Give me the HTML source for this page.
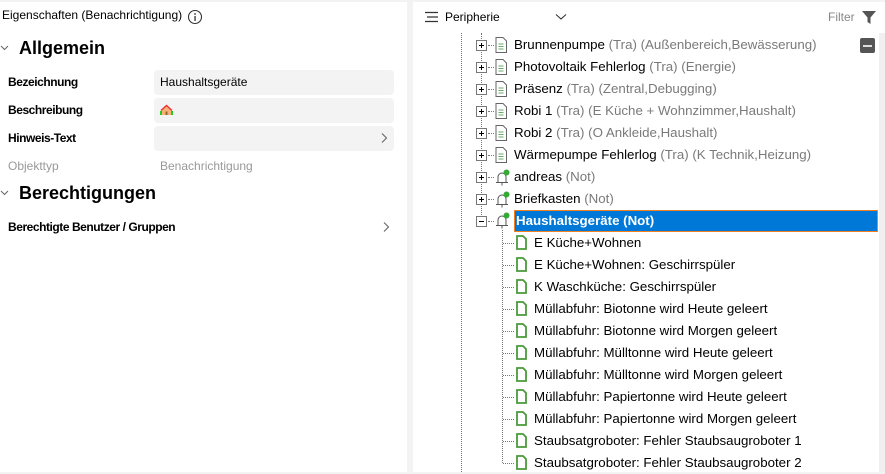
<!DOCTYPE html>
<html><head><meta charset="utf-8"><style>
*{margin:0;padding:0;box-sizing:border-box}
body{width:885px;height:472px;overflow:hidden;background:#f3f3f3;font-family:"Segoe UI","Liberation Sans",sans-serif;position:relative;color:#000}
.a{position:absolute;white-space:nowrap}
#L{position:absolute;left:0;top:2px;width:407px;height:470px;background:#fff}
#R{position:absolute;left:413px;top:2px;width:472px;height:470px;background:#fff}
.lab{font-size:12px;font-weight:700;left:8px;letter-spacing:-0.45px}
.box{position:absolute;left:154px;width:240px;height:25px;background:#f3f3f3;border-radius:4px}
.h{font-size:18px;font-weight:700;left:19px}
.row{position:absolute;height:22px;font-size:13.3px;line-height:22px;white-space:nowrap}
.g{color:#7a7a7a}
.pb{position:absolute;left:476px;width:11px;height:11px;border:1px solid #777;background:#fff}
.pb:before{content:"";position:absolute;left:2px;top:4px;width:5px;height:1px;background:#000}
.pb.p:after{content:"";position:absolute;left:4px;top:2px;width:1px;height:5px;background:#000}
.vd{position:absolute;width:0;border-left:1px dotted #777}
.hd{position:absolute;height:0;border-top:1px dotted #777}
</style></head><body>
<div id="L"></div><div id="R"></div>
<div class="a" style="left:2px;top:8px;font-size:12px">Eigenschaften (Benachrichtigung)</div>
<svg class="a" style="left:187px;top:9px" width="16" height="16"><circle cx="8" cy="8" r="6.5" fill="none" stroke="#333" stroke-width="1.1"/><rect x="7.4" y="7" width="1.3" height="5" fill="#333"/><circle cx="8" cy="5" r="0.9" fill="#333"/></svg>
<svg class="a" style="left:0;top:44px" width="10" height="8"><path d="M1 2l3.5 3.5L8 2" fill="none" stroke="#666" stroke-width="1"/></svg>
<div class="a h" style="top:38px">Allgemein</div>
<div class="box" style="top:70px"></div><div class="box" style="top:98px"></div><div class="box" style="top:126px"></div>
<div class="a lab" style="top:75px">Bezeichnung</div>
<div class="a" style="left:160px;top:75px;font-size:12px">Haushaltsgeräte</div>
<div class="a lab" style="top:103px">Beschreibung</div>
<svg class="a" style="left:160px;top:104px" width="14" height="12"><rect x="0" y="7" width="13" height="4" fill="#2c2"/><path d="M2 6L6.5 2 11 6V11H2z" fill="#f4b37a"/><path d="M1 6.5L6.5 1.5 12 6.5" fill="none" stroke="#e33" stroke-width="1.5"/><rect x="5.5" y="7.5" width="2" height="3.5" fill="#963"/></svg>
<div class="a lab" style="top:131px">Hinweis-Text</div>
<svg class="a" style="left:380px;top:132px" width="8" height="12"><path d="M2 1.5l4.5 4.5L2 10.5" fill="none" stroke="#666" stroke-width="1.1"/></svg>
<div class="a" style="left:8px;top:159px;font-size:12px;color:#999">Objekttyp</div>
<div class="a" style="left:160px;top:159px;font-size:12px;color:#999">Benachrichtigung</div>
<svg class="a" style="left:0;top:189px" width="10" height="8"><path d="M1 2l3.5 3.5L8 2" fill="none" stroke="#666" stroke-width="1"/></svg>
<div class="a h" style="top:183px">Berechtigungen</div>
<div class="a lab" style="top:220px">Berechtigte Benutzer / Gruppen</div>
<svg class="a" style="left:382px;top:221px" width="8" height="12"><path d="M2 1.5l4.5 4.5L2 10.5" fill="none" stroke="#666" stroke-width="1.1"/></svg>

<svg class="a" style="left:424px;top:11px" width="16" height="12"><path d="M1 1.5h13M3 6h11M1 10.5h13" stroke="#333" stroke-width="1.2"/></svg>
<div class="a" style="left:445px;top:10px;font-size:12px">Peripherie</div>
<svg class="a" style="left:555px;top:13px" width="12" height="8"><path d="M1 1.5l5 4.5 5-4.5" fill="none" stroke="#333" stroke-width="1.1"/></svg>
<div class="a" style="left:828px;top:10px;font-size:12px;color:#888">Filter</div>
<svg class="a" style="left:861px;top:10px" width="16" height="15"><path d="M1 1h14L9.5 7.5V14L6.5 12V7.5z" fill="#555"/></svg>
<div class="a" style="left:879px;top:33px;width:6px;height:439px;background:#f0f0f0"></div>
<div class="a" style="left:860px;top:38px;width:15px;height:15px;background:#555;border-radius:2px"><div style="position:absolute;left:3px;top:7px;width:9px;height:1.5px;background:#ddd"></div></div>

<div class="vd" style="left:461px;top:33px;height:439px"></div>
<div class="vd" style="left:481px;top:33px;height:188px"></div>
<div class="vd" style="left:502px;top:230px;height:233px"></div>

<div id="tree"></div>
<script>
var P=[["Brunnenpumpe","(Tra) (Außenbereich,Bewässerung)",0],["Photovoltaik Fehlerlog","(Tra) (Energie)",0],["Präsenz","(Tra) (Zentral,Debugging)",0],["Robi 1","(Tra) (E Küche + Wohnzimmer,Haushalt)",0],["Robi 2","(Tra) (O Ankleide,Haushalt)",0],["Wärmepumpe Fehlerlog","(Tra) (K Technik,Heizung)",0],["andreas","(Not)",1],["Briefkasten","(Not)",1]];
var C=["E Küche+Wohnen","E Küche+Wohnen: Geschirrspüler","K Waschküche: Geschirrspüler","Müllabfuhr: Biotonne wird Heute geleert","Müllabfuhr: Biotonne wird Morgen geleert","Müllabfuhr: Mülltonne wird Heute geleert","Müllabfuhr: Mülltonne wird Morgen geleert","Müllabfuhr: Papiertonne wird Heute geleert","Müllabfuhr: Papiertonne wird Morgen geleert","Staubsatgroboter: Fehler Staubsaugroboter 1","Staubsatgroboter: Fehler Staubsaugroboter 2"];
var h="",doc='<svg class="a" style="left:495px;top:TPpx" width="12" height="16"><path d="M1 .5h7l3.5 3.5v11.5h-10.5z" fill="#fff" stroke="#666"/><path d="M3.5 7h5M3.5 9.5h5M3.5 12h5" stroke="#6a6" stroke-width="1"/></svg>';
var bell='<svg class="a" style="left:494px;top:TPpx" width="16" height="17"><path d="M4 13V8a4 4 0 0 1 8 0v5M2 13.5h12M8 14v2.5" fill="none" stroke="#555" stroke-width="1"/><circle cx="12.5" cy="3.5" r="3" fill="#3a3"/></svg>';
function row(i){return 45+22*i;}
for(var i=0;i<9;i++){var c=row(i);
 h+='<div class="pb '+(i<8?'p':'')+'" style="top:'+(c-5)+'px"></div><div class="hd" style="left:488px;top:'+c+'px;width:6px"></div>';
 if(i<8){h+=(P[i][2]?bell:doc).replace("TP",c-8);
 h+='<div class="row" style="left:514px;top:'+(c-11)+'px">'+P[i][0]+' <span class="g">'+P[i][1]+'</span></div>';}
}
var c8=row(8);h+=bell.replace("TP",c8-9);
h+='<div class="row" style="left:514px;top:'+(c8-11)+'px;width:364px;background:#0078d7;color:#fff;font-weight:700;border:1px solid #f08020;line-height:20px;padding-left:1px">Haushaltsgeräte (Not)</div>';
for(var j=0;j<C.length;j++){var c=row(9+j);
 h+='<div class="hd" style="left:503px;top:'+c+'px;width:11px"></div>';
 h+='<svg class="a" style="left:516px;top:'+(c-8)+'px" width="11" height="15"><path d="M1 1h6l3 3v10h-9z" fill="#fff" stroke="#4a9a3a" stroke-width="1.8"/></svg>';
 h+='<div class="row" style="left:534px;top:'+(c-11)+'px">'+C[j]+'</div>';}
document.getElementById("tree").innerHTML=h;
</script>
</body></html>
